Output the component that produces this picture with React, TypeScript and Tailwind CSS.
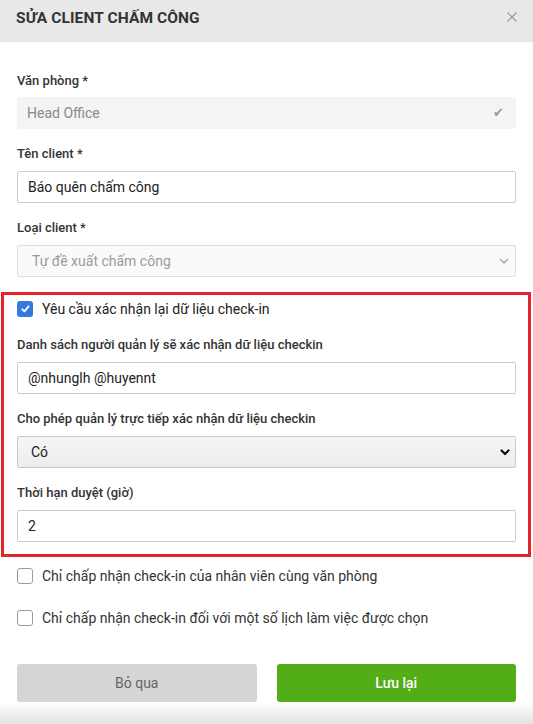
import React from "react";

const font = { fontFamily: "Roboto, 'Noto Sans', Arial, sans-serif" };

function Label({ children }: { children: React.ReactNode }) {
  return <div className="h-[16px] text-[13px] leading-[16px] font-medium text-[#333]">{children}</div>;
}

function Chevron({ color, heavy }: { color: string; heavy?: boolean }) {
  return (
    <svg width="10" height="7" viewBox="0 0 10 7" className="shrink-0">
      <path d="M1.5 1.5 L5 5 L8.5 1.5" fill="none" stroke={color} strokeWidth={heavy ? 2.2 : 1.6} strokeLinecap="round" strokeLinejoin="round" />
    </svg>
  );
}

function CheckBox({ checked }: { checked?: boolean }) {
  if (checked) {
    return (
      <div className="w-[16px] h-[16px] rounded-[3px] bg-[#3478e0] flex items-center justify-center shrink-0">
        <svg width="9" height="8" viewBox="0 0 9 8">
          <path d="M1.3 4.3 L3.4 6.3 L7.6 1.4" fill="none" stroke="#fff" strokeWidth="1.8" strokeLinecap="round" strokeLinejoin="round" />
        </svg>
      </div>
    );
  }
  return <div className="w-[16px] h-[16px] rounded-[3px] border border-[#9a9a9a] bg-white shrink-0" />;
}

export default function App() {
  return (
    <div className="w-[533px] h-[724px] bg-white flex flex-col overflow-hidden" style={font}>
      {/* Header */}
      <div className="h-[42px] bg-[#e8e8e8] flex items-start justify-between pl-[16px] pr-[16px] pt-[8px] shrink-0">
        <div className="text-[15.5px] leading-[20px] font-bold text-[#333] tracking-[0.1px]">SỬA CLIENT CHẤM CÔNG</div>
        <svg width="10" height="10" viewBox="0 0 10 10" className="mt-[4px]">
          <path d="M0.5 0.5 L9.5 9.5 M9.5 0.5 L0.5 9.5" stroke="#9a9a9a" strokeWidth="1.2" />
        </svg>
      </div>

      {/* Body */}
      <div className="flex flex-col px-[17px]">
        <div className="mt-[31px]">
          <Label>Văn phòng *</Label>
        </div>
        <div className="mt-[8px] h-[32px] rounded-[3px] bg-[#f4f4f4] flex items-center justify-between pl-[10px] pr-[12px]">
          <span className="text-[14px] text-[#8a8a8a]">Head Office</span>
          <span className="text-[13px] text-[#9a9a9a]" style={{ fontFamily: "'DejaVu Sans', sans-serif" }}>✔</span>
        </div>

        <div className="mt-[17px]">
          <Label>Tên client *</Label>
        </div>
        <div className="mt-[9px] h-[32px] rounded-[2px] border border-[#cccccc] bg-white flex items-center pl-[10px]">
          <span className="text-[14px] text-[#222]">Báo quên chấm công</span>
        </div>

        <div className="mt-[17px]">
          <Label>Loại client *</Label>
        </div>
        <div className="mt-[9px] h-[32px] rounded-[2px] border border-[#dddddd] bg-[#fafafa] flex items-center justify-between pl-[14px] pr-[6px]">
          <span className="text-[14px] text-[#9c9c9c]">Tự đề xuất chấm công</span>
          <Chevron color="#a8a8a8" />
        </div>

        {/* Red highlighted box */}
        <div className="mt-[15px] ml-[-16px] mr-[-15px] border-[3px] border-[#e3252b] pl-[13px] pr-[12px] pt-[4px] pb-[12px] flex flex-col">
          <div className="h-[20px] flex items-center gap-[9px]">
            <CheckBox checked />
            <span className="text-[14px] text-[#222]">Yêu cầu xác nhận lại dữ liệu check-in</span>
          </div>

          <div className="mt-[18px]">
            <Label>Danh sách người quản lý sẽ xác nhận dữ liệu checkin</Label>
          </div>
          <div className="mt-[9px] h-[32px] rounded-[2px] border border-[#cccccc] bg-white flex items-center pl-[10px]">
            <span className="text-[14px] text-[#222]">@nhunglh @huyennt</span>
          </div>

          <div className="mt-[17px]">
            <Label>Cho phép quản lý trực tiếp xác nhận dữ liệu checkin</Label>
          </div>
          <div className="mt-[9px] h-[32px] rounded-[2px] border border-[#c8c8c8] bg-linear-to-b from-[#f6f6f6] to-[#ececec] flex items-center justify-between pl-[13px] pr-[5px]">
            <span className="text-[14px] text-[#222]">Có</span>
            <Chevron color="#111" heavy />
          </div>

          <div className="mt-[17px]">
            <Label>Thời hạn duyệt (giờ)</Label>
          </div>
          <div className="mt-[9px] h-[32px] rounded-[2px] border border-[#cccccc] bg-white flex items-center pl-[10px]">
            <span className="text-[14px] text-[#222]">2</span>
          </div>
        </div>

        <div className="mt-[9px] h-[20px] flex items-center gap-[9px]">
          <CheckBox />
          <span className="text-[14px] text-[#333]">Chỉ chấp nhận check-in của nhân viên cùng văn phòng</span>
        </div>
        <div className="mt-[22px] h-[20px] flex items-center gap-[9px]">
          <CheckBox />
          <span className="text-[14px] text-[#333]">Chỉ chấp nhận check-in đối với một số lịch làm việc được chọn</span>
        </div>

        <div className="mt-[36px] grid grid-cols-2 gap-[20px]">
          <div className="h-[38px] rounded-[3px] bg-[#d5d5d5] flex items-center justify-center text-[14px] text-[#666]">Bỏ qua</div>
          <div className="h-[38px] rounded-[3px] bg-[#52ad17] flex items-center justify-center text-[14px] font-medium text-white">Lưu lại</div>
        </div>
      </div>

      <div className="mt-auto h-[22px] bg-linear-to-b from-white to-[#e3e3e3] shrink-0" />
    </div>
  );
}
